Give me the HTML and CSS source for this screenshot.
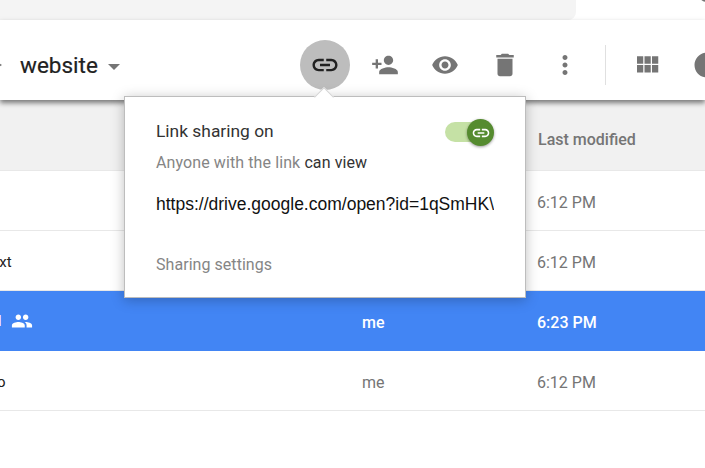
FILE: index.html
```html
<!DOCTYPE html>
<html lang="en">
<head>
<meta charset="utf-8">
<title>website - Drive</title>
<link rel="stylesheet" href="styles.css">
</head>
<body>
<div class="page">
  <div class="topbar"><div class="search"></div></div>
  <div class="avatar"></div>
  <header class="toolbar">
    <span class="crumb-arrow"></span>
    <span class="folder">website</span>
    <span class="caret"></span>
    <div class="actions">
      <button class="act act-on"><svg class="ic" viewBox="0 0 24 24"><path d="M3.9 12c0-1.71 1.39-3.1 3.1-3.1h4V7H7c-2.76 0-5 2.24-5 5s2.24 5 5 5h4v-1.9H7c-1.71 0-3.1-1.39-3.1-3.1zM8 13h8v-2H8v2zm9-6h-4v1.9h4c1.71 0 3.1 1.39 3.1 3.1s-1.39 3.1-3.1 3.1h-4V17h4c2.76 0 5-2.24 5-5s-2.24-5-5-5z"/></svg></button>
      <button class="act"><svg class="ic ic-28" viewBox="0 0 24 24"><path d="M15 12c2.21 0 4-1.79 4-4s-1.79-4-4-4-4 1.79-4 4 1.79 4 4 4zm-9-2V7H4v3H1v2h3v3h2v-3h3v-2H6zm9 4c-2.67 0-8 1.34-8 4v2h16v-2c0-2.66-5.33-4-8-4z"/></svg></button>
      <button class="act"><svg class="ic ic-28" viewBox="0 0 24 24"><path d="M12 4.5C7 4.5 2.73 7.61 1 12c1.73 4.39 6 7.5 11 7.5s9.27-3.11 11-7.5c-1.73-4.39-6-7.5-11-7.5zM12 17c-2.76 0-5-2.24-5-5s2.24-5 5-5 5 2.24 5 5-2.24 5-5 5zm0-8c-1.66 0-3 1.34-3 3s1.34 3 3 3 3-1.34 3-3-1.34-3-3-3z"/></svg></button>
      <button class="act"><svg class="ic" viewBox="0 0 24 24"><path d="M6 19c0 1.1.9 2 2 2h8c1.1 0 2-.9 2-2V7H6v12zM19 4h-3.5l-1-1h-5l-1 1H5v2h14V4z"/></svg></button>
      <button class="act"><svg class="ic" viewBox="0 0 24 24"><path d="M12 8c1.1 0 2-.9 2-2s-.9-2-2-2-2 .9-2 2 .9 2 2 2zm0 2c-1.1 0-2 .9-2 2s.9 2 2 2 2-.9 2-2-.9-2-2-2zm0 6c-1.1 0-2 .9-2 2s.9 2 2 2 2-.9 2-2-.9-2-2-2z"/></svg></button>
      <span class="divider"></span>
      <button class="act act-small"><svg class="ic" viewBox="0 0 24 24"><path d="M4 11h5V5H4v6zm0 7h5v-6H4v6zm6 0h5v-6h-5v6zm6 0h5v-6h-5v6zm-6-7h5V5h-5v6zm6-6v6h5V5h-5z"/></svg></button>
      <button class="act act-small act-info"><svg class="ic" viewBox="0 0 24 24"><path d="M12 2C6.48 2 2 6.48 2 12s4.48 10 10 10 10-4.48 10-10S17.52 2 12 2zm1 15h-2v-6h2v6zm0-8h-2V7h2v2z"/></svg></button>
    </div>
  </header>
  <main class="table">
    <div class="row head"><span class="name"></span><span class="owner"></span><span class="date">Last modified</span></div>
    <div class="row"><span class="name"></span><span class="owner"></span><span class="date">6:12 PM</span></div>
    <div class="row"><span class="name"><span class="f-txt">notes.txt</span></span><span class="owner"></span><span class="date">6:12 PM</span></div>
    <div class="row selected">
      <span class="name"><span class="clip">l</span><svg class="people" viewBox="0 0 24 24"><path d="M16 11c1.66 0 2.99-1.34 2.99-3S17.66 5 16 5c-1.66 0-3 1.34-3 3s1.34 3 3 3zm-8 0c1.66 0 2.99-1.34 2.99-3S9.66 5 8 5C6.34 5 5 6.34 5 8s1.34 3 3 3zm0 2c-2.33 0-7 1.17-7 3.5V19h14v-2.5c0-2.33-4.67-3.5-7-3.5zm8 0c-.29 0-.62.02-.97.05 1.16.84 1.97 1.97 1.97 3.45V19h6v-2.5c0-2.33-4.67-3.5-7-3.5z"/></svg></span>
      <span class="owner">me</span><span class="date">6:23 PM</span>
    </div>
    <div class="row"><span class="name"><span class="f-photo">photo</span></span><span class="owner">me</span><span class="date">6:12 PM</span></div>
  </main>
  <section class="popover">
    <span class="arrow"></span>
    <div class="pop-head">
      <span class="pop-title">Link sharing on</span>
      <span class="toggle"><span class="track"></span><span class="thumb"><svg viewBox="0 0 24 24"><path d="M3.9 12c0-1.71 1.39-3.1 3.1-3.1h4V7H7c-2.76 0-5 2.24-5 5s2.24 5 5 5h4v-1.9H7c-1.71 0-3.1-1.39-3.1-3.1zM8 13h8v-2H8v2zm9-6h-4v1.9h4c1.71 0 3.1 1.39 3.1 3.1s-1.39 3.1-3.1 3.1h-4V17h4c2.76 0 5-2.24 5-5s-2.24-5-5-5z"/></svg></span></span>
    </div>
    <p class="pop-sub">Anyone with the link <span class="can">can view</span></p>
    <div class="pop-url">https://drive.google.com/open?id=1qSmHK\</div>
    <div class="pop-settings">Sharing settings</div>
  </section>
</div>
</body>
</html>
```
FILE: styles.css
```css
* { box-sizing: border-box; }
html, body { margin: 0; padding: 0; background: #fff; }
.page {
  position: relative;
  width: 705px;
  height: 468px;
  overflow: hidden;
  font-family: Roboto, "Liberation Sans", sans-serif;
  color: #212121;
}
.topbar { height: 20px; }
.search {
  width: 576px;
  height: 20px;
  background: #f4f4f4;
  border-radius: 0 0 8px 0;
}
.avatar {
  position: absolute;
  left: 698px;
  top: -16px;
  width: 18px;
  height: 18px;
  border-radius: 50%;
  background: #757575;
}
.toolbar {
  position: relative;
  z-index: 1;
  display: flex;
  align-items: center;
  height: 80px;
  padding-top: 10px;
  background: #fff;
  box-shadow: 0 3px 5px rgba(0,0,0,.5);
}
.crumb-arrow {
  position: absolute;
  left: -3px;
  top: 42px;
  border-left: 5px solid #757575;
  border-top: 3px solid transparent;
  border-bottom: 3px solid transparent;
}
.folder {
  margin-left: 20px;
  font-size: 22.5px;
  font-weight: 400;
  line-height: 30px;
  -webkit-text-stroke: .2px #212121;
}
.caret {
  margin-left: 10px;
  margin-top: 3px;
  border-top: 6px solid #757575;
  border-left: 6.5px solid transparent;
  border-right: 6.5px solid transparent;
}
.actions {
  position: absolute;
  left: 295px;
  top: 0;
  height: 80px;
  padding-top: 10px;
  display: flex;
  align-items: center;
}
.act {
  width: 60px;
  height: 50px;
  padding: 0;
  border: 0;
  background: none;
  display: flex;
  align-items: center;
  justify-content: center;
}
.act-small { width: 57px; }
.act-info { margin-left: 3px; }
.ic { width: 30px; height: 30px; fill: #757575; display: block; }
.ic-28 { width: 28px; height: 28px; }
.act-on { position: relative; }
.act-on::before {
  content: "";
  position: absolute;
  left: 5px;
  top: 0;
  width: 50px;
  height: 50px;
  border-radius: 50%;
  background: #bdbdbd;
}
.act-on .ic { position: relative; fill: #212121; }
.divider {
  width: 1px;
  height: 40px;
  margin: 0 12px 0 10px;
  background: #e0e0e0;
}
.table { display: block; }
.row {
  display: flex;
  align-items: center;
  height: 60px;
  padding-top: 3px;
  border-bottom: 1px solid #e8e8e8;
  font-size: 14px;
}
.head {
  height: 71px;
  padding-top: 8px;
  background: #f1f1f1;
  border-bottom: 1px solid #e8e8e8;
}
.name {
  width: 362px;
  flex: none;
  display: flex;
  align-items: center;
  overflow: hidden;
  font-size: 15px;
  color: #212121;
}
.f-txt { margin-left: -47px; }
.f-photo { margin-left: -33px; }
.clip { margin-left: -2px; color: #fff; }
.people { width: 22px; height: 22px; margin-left: 9px; fill: #fff; }
.selected .name { padding-bottom: 2px; }
.owner { width: 175px; flex: none; color: #757575; font-size: 16px; }
.date { color: #757575; font-size: 16px; }
.head .date { margin-left: 1px; font-weight: 500; }
.selected {
  background: #4285f4;
  border-bottom-color: #4285f4;
}
.selected .owner, .selected .date { color: #fff; font-weight: 500; }
.popover {
  position: absolute;
  z-index: 2;
  left: 124px;
  top: 96px;
  width: 402px;
  height: 202px;
  padding: 0 31px;
  background: #fff;
  border: 1px solid #bdbdbd;
  box-shadow: 0 2px 12px rgba(0,0,0,.25);
}
.arrow {
  position: absolute;
  left: 192px;
  top: -7px;
  width: 14px;
  height: 14px;
  background: #fff;
  border-left: 1px solid #d4d4d4;
  border-top: 1px solid #d4d4d4;
  transform: rotate(45deg);
}
.pop-head {
  position: relative;
  display: flex;
  align-items: center;
  height: 22px;
  margin-top: 23px;
}
.pop-title { font-size: 17.4px; color: #333; line-height: 22px; }
.toggle {
  position: absolute;
  left: 289px;
  top: -1px;
  width: 50px;
  height: 27px;
}
.track {
  position: absolute;
  left: 0;
  top: 3px;
  width: 40px;
  height: 20px;
  border-radius: 10px;
  background: #c5e1a5;
}
.thumb {
  position: absolute;
  left: 22px;
  top: 0;
  width: 27px;
  height: 27px;
  border-radius: 50%;
  background: #558b2f;
  box-shadow: 0 1px 3px rgba(0,0,0,.4);
  display: flex;
  align-items: center;
  justify-content: center;
}
.thumb svg { width: 20px; height: 20px; fill: #fff; }
.pop-sub {
  margin: 11px 0 0;
  font-size: 16px;
  letter-spacing: .1px;
  line-height: 20px;
  color: #858585;
  white-space: nowrap;
}
.can { color: #333; }
.pop-url {
  margin-top: 20px;
  width: 338px;
  overflow: hidden;
  white-space: nowrap;
  font-size: 17.5px;
  line-height: 22px;
  font-family: "Liberation Sans", Arial, sans-serif;
  color: #111;
}
.pop-settings {
  margin-top: 40px;
  font-size: 16px;
  letter-spacing: .05px;
  line-height: 20px;
  color: #858585;
}
```
